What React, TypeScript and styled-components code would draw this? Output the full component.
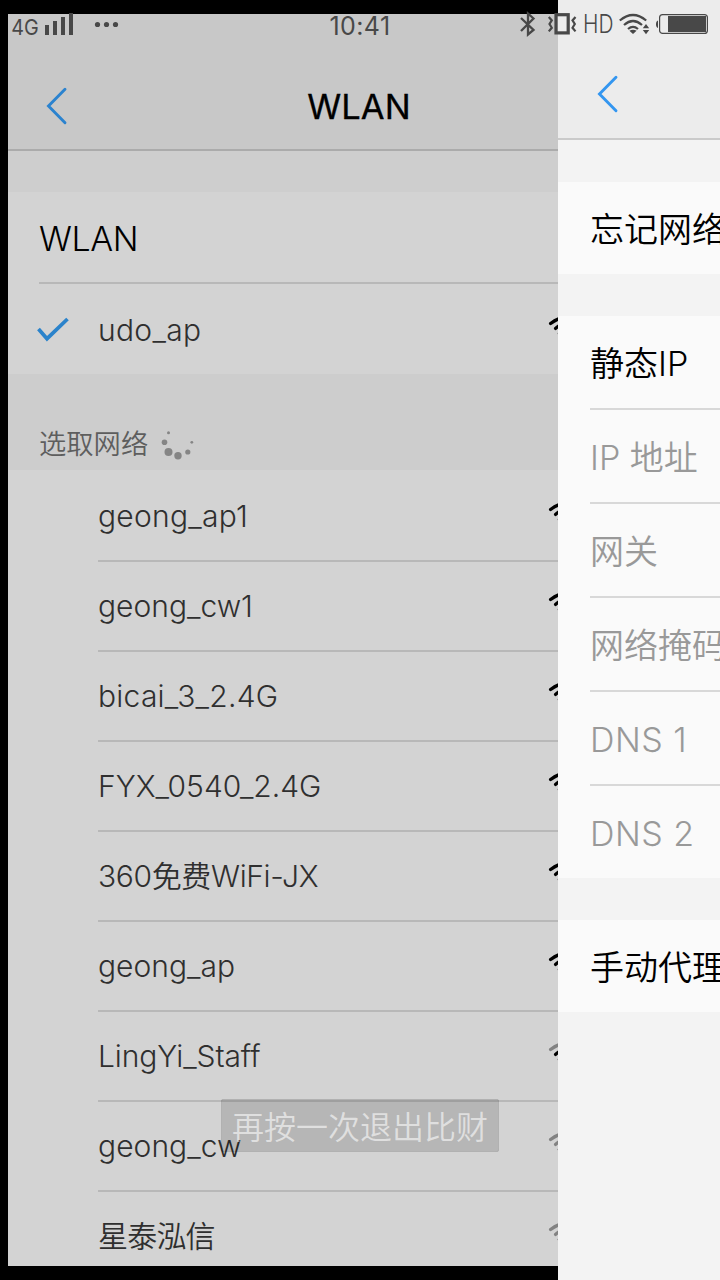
import React from 'react';
import styled, { createGlobalStyle } from 'styled-components';

const GlobalStyle = createGlobalStyle`
  * { box-sizing: border-box; }
  body {
    margin: 0;
    background: #000;
    font-family: Inter, 'Noto Sans CJK SC', sans-serif;
    font-weight: 350;
  }
`;

const Phone = styled.div`
  position: relative;
  display: flex;
  width: 720px;
  height: 1280px;
  overflow: hidden;
  background: #000;
`;

const StatusBar = styled.div`
  position: absolute;
  inset: 0 0 auto 0;
  z-index: 3;
  height: 48px;
  display: grid;
  grid-template-columns: 1fr auto 1fr;
  color: #484848;
`;

const StatusGroup = styled.div<{ $end?: boolean }>`
  display: flex;
  justify-content: ${(p) => (p.$end ? 'flex-end' : 'flex-start')};
`;

const Clock = styled.div`
  font-size: 25px;
  font-weight: 400;
  line-height: 52px;
  letter-spacing: 0.4px;
`;

const BackViewport = styled.div`
  width: 550px;
  height: 1252px;
  margin: 14px 0 0 8px;
  overflow: hidden;
  flex: none;
`;

const BackScreen = styled.div`
  width: 702px;
  height: 100%;
  background: #cecece;
`;

const BackHeader = styled.header`
  display: grid;
  grid-template-columns: 100px 1fr 100px;
  height: 137px;
  padding-top: 48px;
  align-items: center;
  background: #c8c8c8;
  border-bottom: 2px solid #ababab;
  svg { margin-left: 36.5px; }
`;

const Title = styled.h1`
  margin: 0;
  padding-top: 2px;
  text-align: center;
  font-size: 34.5px;
  font-weight: 400;
  letter-spacing: 0.1px;
  -webkit-text-stroke: 0.3px #000;
  color: #000;
`;

const BackCard = styled.section<{ $gap?: number }>`
  margin-top: ${(p) => p.$gap ?? 0}px;
  background: #d3d3d3;
`;

const SwitchRow = styled.div`
  height: 92px;
  margin-left: 31px;
  border-bottom: 2px solid #b8b8b8;
  font-size: 34px;
  line-height: 94px;
  letter-spacing: -0.4px;
  color: #000;
`;

const NetworkRow = styled.div`
  display: flex;
  height: 90px;
`;

const Mark = styled.div`
  width: 90px;
  flex: none;
  padding: 32px 0 0 28px;
`;

const NetworkBody = styled.div<{ $first?: boolean }>`
  flex: 1;
  display: flex;
  justify-content: space-between;
  box-shadow: ${(p) => (p.$first ? 'none' : 'inset 0 2px 0 #b8b8b8')};
`;

const NetworkName = styled.span<{ $spacing: number }>`
  font-size: 30px;
  line-height: 93px;
  letter-spacing: ${(p) => p.$spacing}px;
  white-space: nowrap;
  color: #2f2f2f;
`;

const Signal = styled.div`
  width: 163px;
  padding-top: 26px;
`;

const SectionTitle = styled.div`
  display: flex;
  height: 96px;
  padding: 44px 0 0 31px;
  font-size: 27.3px;
  line-height: 54px;
  color: #5e5e5e;
  background: #cdcdcd;
  svg { margin: 10px 0 0 12px; }
`;

const FrontScreen = styled.main`
  flex: none;
  width: 162px;
  height: 1280px;
  overflow: hidden;
  background: #f3f3f3;
`;

const FrontHeader = styled.header`
  height: 140px;
  padding: 74px 0 0 37.5px;
  background: #ececec;
  border-bottom: 2px solid #cacaca;
`;

const FrontCard = styled.section`
  margin-top: 42px;
  padding-left: 32px;
  background: #fafafa;
`;

const Field = styled.div<{ $muted?: boolean; $last?: boolean; $spacing?: number }>`
  height: ${(p) => (p.$last ? 92 : 94)}px;
  border-bottom: ${(p) => (p.$last ? 'none' : '2px solid #d8d8d8')};
  font-size: 34px;
  line-height: 96px;
  letter-spacing: ${(p) => p.$spacing ?? 0}px;
  white-space: nowrap;
  color: ${(p) => (p.$muted ? '#999' : '#000')};
`;

const Toast = styled.div`
  position: absolute;
  left: 221px;
  top: 1099px;
  width: 278px;
  height: 53px;
  border-radius: 3px;
  background: rgba(0, 0, 0, 0.135);
  box-shadow: inset 0 0 1px rgba(0, 0, 0, 0.3);
  color: rgba(255, 255, 255, 0.58);
  font-size: 32px;
  line-height: 57px;
  text-align: center;
  white-space: nowrap;
`;

const Svg = styled.svg`
  display: block;
  flex: none;
  overflow: visible;
`;

const Chevron = ({ color }: { color: string }) => (
  <Svg width="24" height="40" viewBox="0 0 24 40">
    <path d="M20 3.3 3.5 20 20 36.7" fill="none" stroke={color} strokeWidth="2.9" strokeLinecap="round" />
  </Svg>
);

const Check = () => (
  <Svg width="34" height="28" viewBox="0 0 34 28">
    <path d="M2.5 13 11 22.7 31.5 3" fill="none" stroke="#2b83cb" strokeWidth="3.7" />
  </Svg>
);

const Spinner = () => (
  <Svg width="34" height="34" viewBox="0 0 34 34" fill="#858585">
    <circle cx="8.5" cy="4.7" r="1.5" />
    <circle cx="4.5" cy="14.3" r="2.8" />
    <circle cx="8.5" cy="24" r="4" />
    <circle cx="18" cy="27.7" r="3.7" />
    <circle cx="27.8" cy="24" r="2.6" />
    <circle cx="31.8" cy="14.3" r="1.4" />
  </Svg>
);

const WifiStrength = ({ level }: { level: number }) => {
  const shade = (n: number) => (level >= n ? '#000' : '#828282');
  return (
    <Svg width="36" height="32" viewBox="0 0 36 32" fill="none" strokeWidth="3.3" strokeLinecap="round">
      <path d="M3.6 13.5Q18 2 32.4 13.5" stroke={shade(4)} />
      <path d="M8.6 18.4Q18 9.5 27.4 18.4" stroke={shade(3)} />
      <path d="M12.5 23.5Q18 18.5 23.5 23.5" stroke={shade(2)} />
      <circle cx="18" cy="28" r="1" stroke={shade(1)} />
    </Svg>
  );
};

const CellSignal = () => (
  <Svg width="120" height="48" viewBox="0 0 120 48" fill="#484848">
    <text x="11.2" y="35" fontSize="22" fontWeight="400" textLength="27.5" lengthAdjust="spacingAndGlyphs">4G</text>
    <path d="M45 25h4v10h-4zM53 21h4v14h-4zM61 17h4v18h-4zM69 13h4v22h-4z" />
    <circle cx="97.5" cy="24.5" r="2.6" />
    <circle cx="106.5" cy="24.5" r="2.6" />
    <circle cx="115.5" cy="24.5" r="2.6" />
  </Svg>
);

const Bluetooth = () => (
  <Svg width="28" height="48" viewBox="0 0 28 48">
    <path d="M1 18 13.5 30 8 34.5V13.5l5.5 5L1 31" fill="none" stroke="#484848" strokeWidth="2.3" />
  </Svg>
);

const Vibrate = () => (
  <Svg width="36" height="48" viewBox="0 0 36 48" fill="none" stroke="#484848">
    <rect x="8" y="14.7" width="12.2" height="18.2" strokeWidth="3.2" />
    <path d="M.8 17l3 3.4L1.5 24l2.3 3.8-3 3.6M27.5 17l-3 3.4 2.3 3.6-2.3 3.8 3 3.6" strokeWidth="2.2" />
  </Svg>
);

const HdBadge = () => (
  <Svg width="35" height="48" viewBox="0 0 35 48" fill="#484848">
    <text x="-1" y="33" fontSize="26" fontWeight="350" textLength="30.5" lengthAdjust="spacingAndGlyphs">HD</text>
  </Svg>
);

const StatusWifi = () => (
  <Svg width="37" height="48" viewBox="0 0 37 48" fill="none" stroke="#484848" strokeWidth="2.2">
    <path d="M.8 20.5Q14 9.5 27.2 20.5M5 25Q14 17 23 25M9 29Q14 24.8 19 29" />
    <path d="M14 34l-3.6-3.2Q14 28.5 17.6 30.8z" fill="#484848" stroke="none" />
    <path d="M27 24l3.2 4.2h-6.4zM27 34.2l3.2-4.2h-6.4z" fill="#484848" stroke="none" />
  </Svg>
);

const Battery = () => (
  <Svg width="64" height="48" viewBox="0 0 64 48" fill="#484848">
    <path d="M2 20.5v7.5Q0 27.5 0 24.25T2 20.5z" />
    <rect x="3.6" y="14.6" width="47.8" height="18.8" rx="3" fill="none" stroke="#484848" strokeWidth="1.2" />
    <rect x="12" y="16" width="38" height="16" />
  </Svg>
);

const networks = [
  { name: 'geong_ap1', level: 4, spacing: 0.25 },
  { name: 'geong_cw1', level: 4, spacing: 0 },
  { name: 'bicai_3_2.4G', level: 4, spacing: 0.25 },
  { name: 'FYX_0540_2.4G', level: 4, spacing: 0 },
  { name: '360免费WiFi-JX', level: 4, spacing: -0.35 },
  { name: 'geong_ap', level: 4, spacing: 0 },
  { name: 'LingYi_Staff', level: 3, spacing: -0.1 },
  { name: 'geong_cw', level: 2, spacing: 0.05 },
  { name: '星泰泓信', level: 2, spacing: -0.8 },
];

const fields = [
  { label: 'IP 地址', spacing: 0 },
  { label: '网关', spacing: 0 },
  { label: '网络掩码', spacing: 0 },
  { label: 'DNS 1', spacing: 0.5 },
  { label: 'DNS 2', spacing: 0.5 },
];

export default function App() {
  return (
    <Phone>
      <GlobalStyle />
      <StatusBar>
        <StatusGroup><CellSignal /></StatusGroup>
        <Clock>10:41</Clock>
        <StatusGroup $end>
          <Bluetooth />
          <Vibrate />
          <HdBadge />
          <StatusWifi />
          <Battery />
        </StatusGroup>
      </StatusBar>
      <BackViewport>
        <BackScreen>
          <BackHeader>
            <Chevron color="#2b83cf" />
            <Title>WLAN</Title>
          </BackHeader>
          <BackCard $gap={41}>
            <SwitchRow>WLAN</SwitchRow>
            <NetworkRow>
              <Mark><Check /></Mark>
              <NetworkBody $first>
                <NetworkName $spacing={0.3}>udo_ap</NetworkName>
                <Signal><WifiStrength level={4} /></Signal>
              </NetworkBody>
            </NetworkRow>
          </BackCard>
          <SectionTitle>选取网络<Spinner /></SectionTitle>
          <BackCard>
            {networks.map((n, i) => (
              <NetworkRow key={n.name}>
                <Mark />
                <NetworkBody $first={i === 0}>
                  <NetworkName $spacing={n.spacing}>{n.name}</NetworkName>
                  <Signal><WifiStrength level={n.level} /></Signal>
                </NetworkBody>
              </NetworkRow>
            ))}
          </BackCard>
        </BackScreen>
      </BackViewport>
      <FrontScreen>
        <FrontHeader><Chevron color="#3396f0" /></FrontHeader>
        <FrontCard><Field $last>忘记网络</Field></FrontCard>
        <FrontCard>
          <Field>静态IP</Field>
          {fields.map((f, i) => (
            <Field key={f.label} $muted $spacing={f.spacing} $last={i === fields.length - 1}>{f.label}</Field>
          ))}
        </FrontCard>
        <FrontCard><Field $last>手动代理</Field></FrontCard>
      </FrontScreen>
      <Toast>再按一次退出比财</Toast>
    </Phone>
  );
}
